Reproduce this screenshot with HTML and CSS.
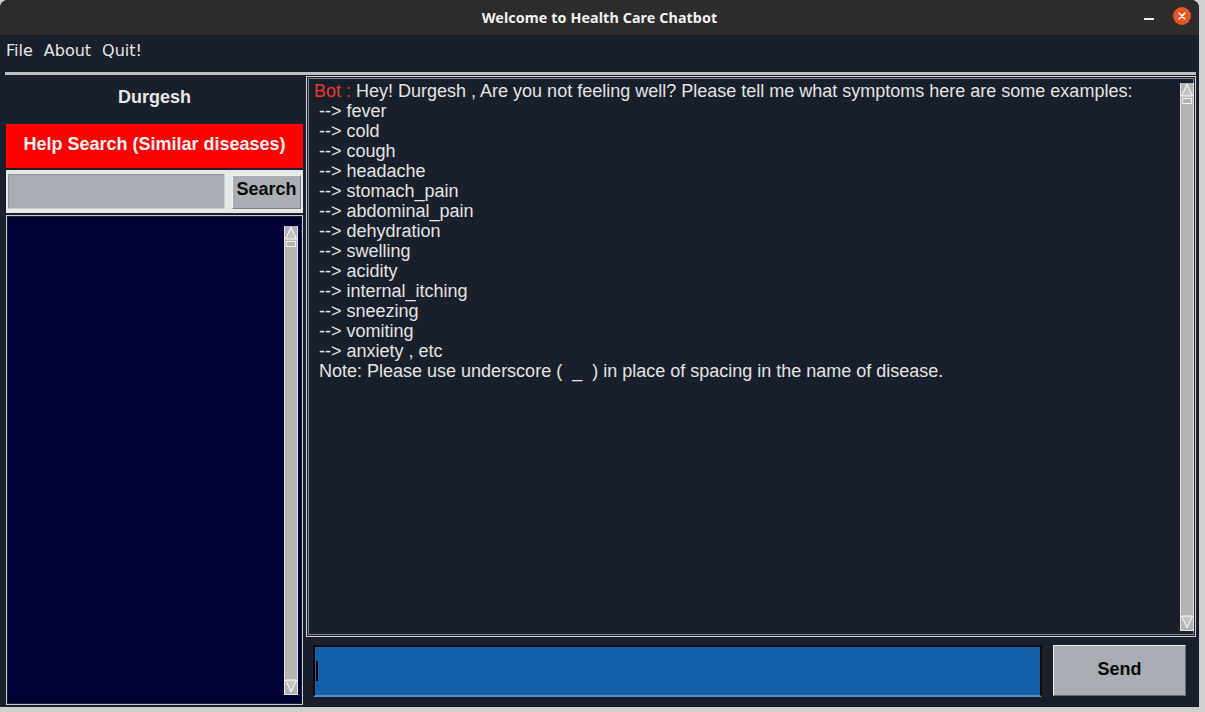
FILE: index.html
```html
<!DOCTYPE html>
<html>
<head>
<meta charset="utf-8">
<link rel="stylesheet" href="styles.css">
</head>
<body>
<div class="desk">
  <div class="window">
    <div class="titlebar">
      <span class="title">Welcome to Health Care Chatbot</span>
      <span class="minimize"></span>
      <span class="close">
        <svg width="18" height="18" viewBox="0 0 18 18"><circle cx="9" cy="9" r="9" fill="#e95420"/><path d="M6 6 L12 12 M12 6 L6 12" stroke="#fff" stroke-width="1.6" stroke-linecap="round"/></svg>
      </span>
    </div>
    <div class="menubar">
      <span class="menu-item">File</span>
      <span class="menu-item">About</span>
      <span class="menu-item">Quit!</span>
    </div>
    <div class="separator"></div>
    <div class="main">
      <div class="left">
        <div class="user">Durgesh</div>
        <div class="help">Help Search (Similar diseases)</div>
        <div class="search-row">
          <div class="search-entry"></div>
          <div class="search-btn">Search</div>
        </div>
        <div class="listbox">
          <div class="scrollbar sb-list">
            <div class="arrow up"><svg width="12" height="14" viewBox="0 0 12 14"><path d="M6 1 L11.5 13 L0.5 13 Z" fill="#c4c4c4" stroke="#fff" stroke-width="1"/></svg></div>
            <div class="thumb"></div>
            <div class="track"></div>
            <div class="arrow down"><svg width="12" height="14" viewBox="0 0 12 14"><path d="M0.5 1 L11.5 1 L6 13 Z" fill="#c4c4c4" stroke="#fff" stroke-width="1"/></svg></div>
          </div>
        </div>
      </div>
      <div class="right">
        <div class="chat">
          <div class="chat-text">
            <div class="line"><span class="bot">Bot :</span><span class="msg"> Hey! Durgesh , Are you not feeling well? Please tell me what symptoms here are some examples:</span></div>
            <div class="line"> --&gt; fever</div>
            <div class="line"> --&gt; cold</div>
            <div class="line"> --&gt; cough</div>
            <div class="line"> --&gt; headache</div>
            <div class="line"> --&gt; stomach_pain</div>
            <div class="line"> --&gt; abdominal_pain</div>
            <div class="line"> --&gt; dehydration</div>
            <div class="line"> --&gt; swelling</div>
            <div class="line"> --&gt; acidity</div>
            <div class="line"> --&gt; internal_itching</div>
            <div class="line"> --&gt; sneezing</div>
            <div class="line"> --&gt; vomiting</div>
            <div class="line"> --&gt; anxiety , etc</div>
            <div class="line"> Note: Please use underscore (  _  ) in place of spacing in the name of disease.</div>
          </div>
          <div class="scrollbar sb-chat">
            <div class="arrow up"><svg width="12" height="14" viewBox="0 0 12 14"><path d="M6 1 L11.5 13 L0.5 13 Z" fill="#c4c4c4" stroke="#fff" stroke-width="1"/></svg></div>
            <div class="thumb"></div>
            <div class="track"></div>
            <div class="arrow down"><svg width="12" height="14" viewBox="0 0 12 14"><path d="M0.5 1 L11.5 1 L6 13 Z" fill="#c4c4c4" stroke="#fff" stroke-width="1"/></svg></div>
          </div>
        </div>
        <div class="input-row">
          <div class="msg-entry"><span class="caret"></span></div>
          <div class="send-btn">Send</div>
        </div>
      </div>
    </div>
  </div>
</div>
</body>
</html>
```
FILE: styles.css
```css
* { box-sizing: border-box; }
html, body { margin: 0; padding: 0; }
body {
  width: 1205px;
  height: 712px;
  overflow: hidden;
  background: #cfd0d0;
  font-family: "Liberation Sans", Arial, sans-serif;
}
.desk { width: 1205px; height: 712px; }
.window {
  width: 1199px;
  height: 707px;
  background: #19202b;
  border-radius: 8px 8px 0 0;
  overflow: hidden;
  display: flex;
  flex-direction: column;
}
.titlebar {
  height: 35px;
  background: #2c2c2c;
  display: flex;
  align-items: center;
  justify-content: center;
  position: relative;
  flex: none;
}
.title {
  color: #f2f2f2;
  font-family: "Noto Sans", "DejaVu Sans", sans-serif;
  font-weight: bold;
  font-size: 14.3px;
  letter-spacing: 0.1px;
  padding-bottom: 1px;
}
.minimize {
  position: absolute;
  left: 1144px;
  top: 18px;
  width: 10px;
  height: 1.5px;
  background: #f0f0f0;
}
.close {
  position: absolute;
  left: 1173px;
  top: 7px;
  width: 18px;
  height: 18px;
}
.close svg { display: block; }
.menubar {
  height: 37px;
  display: flex;
  align-items: center;
  padding-left: 6px;
  padding-bottom: 6px;
  flex: none;
}
.menu-item {
  color: #e6e6e6;
  font-family: "DejaVu Sans", sans-serif;
  font-size: 16px;
  margin-right: 11px;
}
.separator {
  margin-left: 5px;
  width: 1191px;
  height: 3px;
  background: #bcc0c4;
  flex: none;
}
.main {
  display: grid;
  grid-template-columns: 297px 890px;
  column-gap: 3px;
  padding-left: 6px;
  padding-top: 1px;
  flex: 1;
}
.left {
  display: flex;
  flex-direction: column;
}
.user {
  height: 48px;
  display: flex;
  align-items: center;
  justify-content: center;
  color: #e8e8e8;
  font-weight: bold;
  font-size: 18px;
  padding-bottom: 5px;
}
.help {
  height: 44px;
  background: #ff0000;
  color: #f4f4f4;
  font-weight: bold;
  font-size: 18px;
  display: flex;
  align-items: center;
  justify-content: center;
  padding-bottom: 3px;
}
.search-row {
  margin-top: 2px;
  height: 43px;
  background: #e6e8ea;
  display: flex;
  align-items: center;
  padding: 0 2px;
  gap: 7px;
}
.search-entry {
  width: 217px;
  height: 35px;
  background: #a8adb3;
  border: 1px solid #d0d3d6;
  border-top-color: #8d9296;
  border-left-color: #8d9296;
}
.search-btn {
  width: 69px;
  height: 34px;
  background: #a9aeb4;
  border: 1px solid #7c8085;
  border-top-color: #eef0f2;
  border-left-color: #eef0f2;
  color: #0a0a0a;
  font-weight: bold;
  font-size: 18px;
  display: flex;
  align-items: center;
  justify-content: center;
  padding-bottom: 4px;
}
.listbox {
  margin-top: 2px;
  height: 490px;
  background: #000036;
  border: 1px solid #c8c8cc;
  box-shadow: inset 0 0 0 1px #1a2030;
  position: relative;
  display: flex;
  justify-content: flex-end;
  padding: 10px 4px 9px 0;
}
.scrollbar {
  width: 14px;
  background: #b3b3b3;
  display: flex;
  flex-direction: column;
  border: 1px solid #e6e6e6;
  border-top: none;
}
.scrollbar .arrow { height: 15px; display: flex; justify-content: center; flex: none; }
.scrollbar .arrow svg { display: block; }
.scrollbar .thumb { height: 6px; border: 1px solid #f0f0f0; margin: 0 1px; flex: none; }
.scrollbar .track { flex: 1; }
.right {
  display: flex;
  flex-direction: column;
}
.chat {
  height: 561px;
  border: 1px solid #d4d4d4;
  box-shadow: inset 0 0 0 1px #1a2030, inset 0 0 0 2px #7f848a;
  display: flex;
  padding: 6px 1px 5px 7px;
}
.chat-text {
  flex: 1;
  color: #e4e4e4;
  font-size: 18px;
  line-height: 20px;
  margin-top: -2px;
}
.line { white-space: pre; height: 20px; }
.bot { color: #e83a2c; }
.input-row {
  display: flex;
  margin-top: 8px;
  padding-left: 7px;
  gap: 11px;
}
.msg-entry {
  width: 729px;
  height: 52px;
  background: #1261a8;
  border: 2px solid #0a0a0a;
  border-bottom-color: #5a8ac0;
  position: relative;
}
.caret {
  position: absolute;
  left: 1px;
  top: 14px;
  width: 2px;
  height: 20px;
  background: #000;
}
.send-btn {
  width: 133px;
  height: 51px;
  background: #a9aeb4;
  border: 1px solid #6a6e72;
  border-top-color: #eceef0;
  border-left-color: #eceef0;
  color: #0a0a0a;
  font-weight: bold;
  font-size: 18px;
  display: flex;
  align-items: center;
  justify-content: center;
  padding-bottom: 3px;
}
```
